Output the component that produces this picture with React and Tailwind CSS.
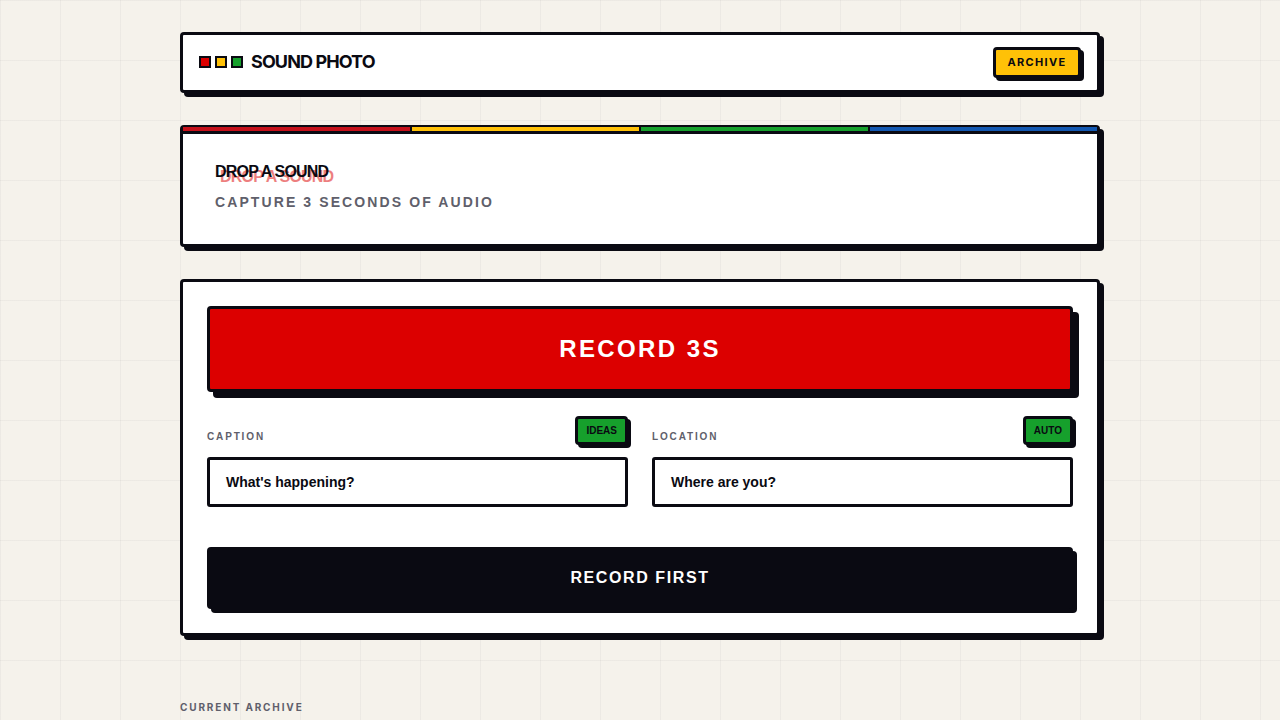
import React from 'react';

const liberation = "font-['Liberation_Sans',Arial,sans-serif]";

function Field({ label, action, placeholder }) {
  return (
    <div className="flex-1 min-w-0">
      <div className="flex items-center justify-between mb-3">
        <label className={`${liberation} text-[10px] font-bold tracking-[1.85px] text-[#5f5f6b] mt-[11px]`}>{label}</label>
        <button className={`${liberation} h-[29px] px-2 border-[3px] border-[#0a0a12] rounded-[4px] bg-[#16a02c] text-[10px] font-bold text-[#0a0a12] shadow-[3px_3px_0_#0a0a12]`}>
          {action}
        </button>
      </div>
      <div className={`${liberation} h-[50px] flex items-center px-4 border-[3px] border-[#0a0a12] rounded-[3px] bg-white text-sm font-bold text-[#0a0a12]`}>
        {placeholder}
      </div>
    </div>
  );
}

export default function App() {
  return (
    <div className="h-[720px] overflow-hidden bg-[#f5f2eb] bg-[linear-gradient(rgba(10,10,18,0.035)_1px,transparent_1px),linear-gradient(90deg,rgba(10,10,18,0.035)_1px,transparent_1px)] bg-[size:60px_60px]">
      <div className="w-[920px] mx-auto pt-8">
        <header className="h-[61px] flex items-center justify-between pl-4 pr-[16px] bg-white border-[3px] border-[#0a0a12] rounded-[4px] shadow-[4px_4px_0_#0a0a12]">
          <div className="flex items-center gap-2 mb-[2px]">
            <div className="flex gap-1">
              <span className="w-3 h-3 border-2 border-[#0a0a12] bg-[#dc0000]" />
              <span className="w-3 h-3 border-2 border-[#0a0a12] bg-[#ffc107]" />
              <span className="w-3 h-3 border-2 border-[#0a0a12] bg-[#16a02c]" />
            </div>
            <span className="font-['Inter',sans-serif] text-lg font-bold tracking-[-0.9px] text-[#0a0a12]">SOUND PHOTO</span>
          </div>
          <button className="font-['Inter',sans-serif] h-[31px] w-[88px] border-[3px] border-[#0a0a12] rounded-[4px] bg-[#ffc107] text-[11px] font-bold tracking-[1.35px] text-[#0a0a12] shadow-[3px_3px_0_#0a0a12]">
            ARCHIVE
          </button>
        </header>

        <section className="mt-8 h-[122px] bg-white border-[3px] border-[#0a0a12] rounded-[4px] shadow-[4px_4px_0_#0a0a12]">
          <div className="flex h-1 -mt-px">
            <div className="flex-1 bg-[#c4101a]" />
            <div className="flex-1 bg-[#ffc107] border-l-[2px] border-[#0a0a12]" />
            <div className="flex-1 bg-[#16a02c] border-l-[2px] border-[#0a0a12]" />
            <div className="flex-1 bg-[#1257b0] border-l-[2px] border-[#0a0a12]" />
          </div>
          <div className="h-[3px] bg-[#0a0a12]" />
          <div className="pt-7 px-8">
            <div className={`relative ${liberation} text-base font-bold leading-5 tracking-[-0.8px] text-[#0a0a12]`}>
              <span className="absolute left-[5px] top-[5px] text-[#dc0000] opacity-50">DROP A SOUND</span>
              <h1 className="relative">DROP A SOUND</h1>
            </div>
            <p className={`${liberation} mt-[10px] text-sm font-bold leading-5 tracking-[2.1px] text-[#5f5f6b]`}>CAPTURE 3 SECONDS OF AUDIO</p>
          </div>
        </section>

        <section className="mt-8 h-[357px] px-6 pt-6 bg-white border-[3px] border-[#0a0a12] rounded-[4px] shadow-[4px_4px_0_#0a0a12]">
          <button className={`${liberation} w-full h-[86px] border-[3px] border-[#0a0a12] rounded-[4px] bg-[#dc0000] text-2xl font-bold tracking-[2.4px] text-white shadow-[6px_6px_0_#0a0a12]`}>
            RECORD 3S
          </button>
          <div className="flex gap-6 mt-6">
            <Field label="CAPTION" action="IDEAS" placeholder="What's happening?" />
            <Field label="LOCATION" action="AUTO" placeholder="Where are you?" />
          </div>
          <button className={`${liberation} w-full h-[62px] mt-10 rounded-[4px] bg-[#0a0a12] text-base font-bold tracking-[1.6px] text-white shadow-[4px_4px_0_#0a0a12]`}>
            RECORD FIRST
          </button>
        </section>

        <h2 className="font-['Inter',sans-serif] mt-[63px] text-[10px] font-bold leading-4 tracking-[1.85px] text-[#5f5f6b]">CURRENT ARCHIVE</h2>
      </div>
    </div>
  );
}
